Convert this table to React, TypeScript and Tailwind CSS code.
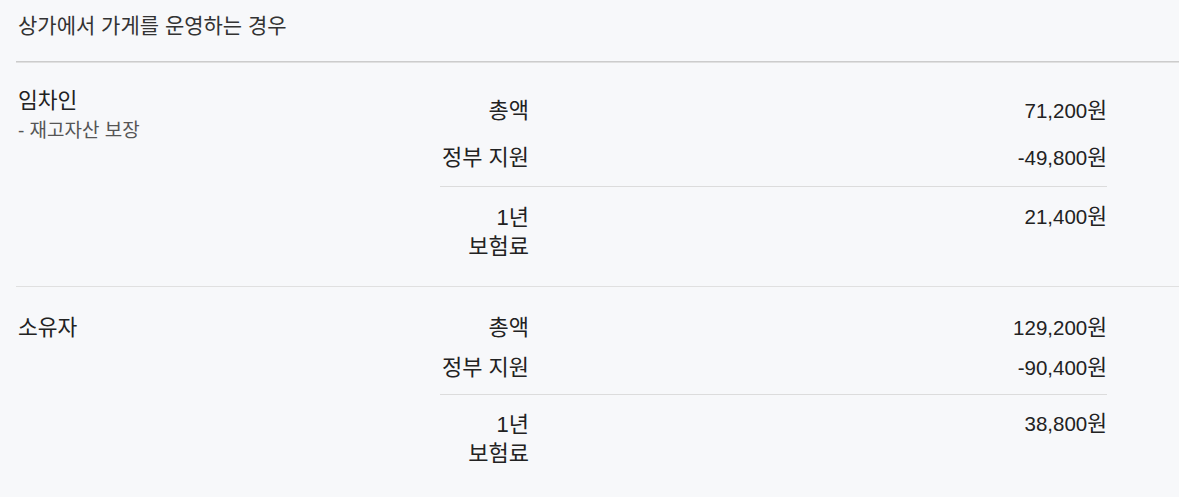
type Row = { label: string[]; amount: string };

type Section = {
  name: string;
  sub?: string;
  padTop: string;
  rightTop: string;
  rowGap: string;
  divider: string;
  rows: Row[];
  total: Row;
};

const sections: Section[] = [
  {
    name: "임차인",
    sub: "- 재고자산 보장",
    padTop: "pt-[24px]",
    rightTop: "pt-[10px]",
    rowGap: "mt-[19px]",
    divider: "mt-[14px] pt-[16px]",
    rows: [
      { label: ["총액"], amount: "71,200" },
      { label: ["정부 지원"], amount: "-49,800" },
    ],
    total: { label: ["1년", "보험료"], amount: "21,400" },
  },
  {
    name: "소유자",
    padTop: "pt-[27px]",
    rightTop: "pt-0",
    rowGap: "mt-[12px]",
    divider: "mt-[12px] pt-[15px]",
    rows: [
      { label: ["총액"], amount: "129,200" },
      { label: ["정부 지원"], amount: "-90,400" },
    ],
    total: { label: ["1년", "보험료"], amount: "38,800" },
  },
];

function PriceRow({ row, className, tall }: { row: Row; className?: string; tall?: boolean }) {
  return (
    <div className={"grid grid-cols-[89px_1fr] leading-[28px] text-[#222] " + (className ?? "")}>
      <div className={"text-right text-[22px] whitespace-nowrap " + (tall ? "leading-[29px]" : "leading-[28px]")}>
        {row.label.map((l) => (
          <div key={l}>{l}</div>
        ))}
      </div>
      <div className="text-right text-[20.5px]">
        {row.amount}
        <span className="text-[21.5px]">원</span>
      </div>
    </div>
  );
}

function InsuranceSection({ s, last }: { s: Section; last: boolean }) {
  return (
    <section className={"flex border-t border-[#e0e0e0] " + s.padTop + (last ? " pb-6" : " pb-[25px]")}>
      <div className="w-[424px] shrink-0 pl-[2px]">
        <div className="text-[21.5px] leading-[28px] text-[#222]">{s.name}</div>
        {s.sub && <div className="mt-[2px] text-[19px] leading-[28px] text-[#555]">{s.sub}</div>}
      </div>
      <div className={"w-[667px] shrink-0 " + s.rightTop}>
        <PriceRow row={s.rows[0]} />
        <PriceRow row={s.rows[1]} className={s.rowGap} />
        <div className={"border-t border-[#dcdcdc] " + s.divider}>
          <PriceRow row={s.total} tall />
        </div>
      </div>
    </section>
  );
}

export default function App() {
  return (
    <div className="min-h-screen bg-[#f7f8fa] pl-4 font-['Liberation_Sans','Noto_Sans_CJK_KR',sans-serif]">
      <h2 className="h-[62px] pl-[2px] pt-[12px] text-[21px] leading-[28px] font-normal text-[#333] border-b border-[#cccccc]">
        상가에서 가게를 운영하는 경우
      </h2>
      {sections.map((s, i) => (
        <InsuranceSection key={s.name} s={s} last={i === sections.length - 1} />
      ))}
    </div>
  );
}
